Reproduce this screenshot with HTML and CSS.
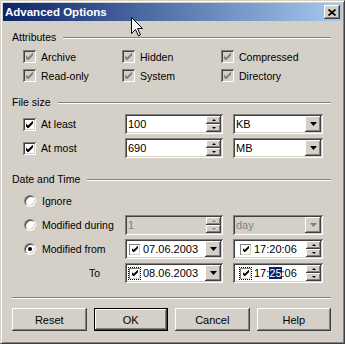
FILE: index.html
```html
<!DOCTYPE html>
<html>
<head>
<meta charset="utf-8">
<link rel="stylesheet" href="styles.css">
</head>
<body>
<div class="window">
  <div class="titlebar">
    <span class="title">Advanced Options</span>
    <span class="close"><svg width="8" height="7" viewBox="0 0 8 7"><path d="M0.5 0.5 L7.5 6.5 M7.5 0.5 L0.5 6.5" stroke="#000" stroke-width="1.7" fill="none"/></svg></span>
  </div>
  <div class="content">
    <div class="group-head"><span>Attributes</span><i class="etch"></i></div>
    <div class="attrs">
      <div class="check-item"><span class="cb disabled"><svg viewBox="0 0 7 7"><polygon points="0,2.5 2,4.5 7,-0.5 7,2.5 2,7.5 0,5.5"/></svg></span>Archive</div>
      <div class="check-item"><span class="cb disabled"><svg viewBox="0 0 7 7"><polygon points="0,2.5 2,4.5 7,-0.5 7,2.5 2,7.5 0,5.5"/></svg></span>Hidden</div>
      <div class="check-item"><span class="cb disabled"><svg viewBox="0 0 7 7"><polygon points="0,2.5 2,4.5 7,-0.5 7,2.5 2,7.5 0,5.5"/></svg></span>Compressed</div>
      <div class="check-item"><span class="cb disabled"><svg viewBox="0 0 7 7"><polygon points="0,2.5 2,4.5 7,-0.5 7,2.5 2,7.5 0,5.5"/></svg></span>Read-only</div>
      <div class="check-item"><span class="cb disabled"><svg viewBox="0 0 7 7"><polygon points="0,2.5 2,4.5 7,-0.5 7,2.5 2,7.5 0,5.5"/></svg></span>System</div>
      <div class="check-item"><span class="cb disabled"><svg viewBox="0 0 7 7"><polygon points="0,2.5 2,4.5 7,-0.5 7,2.5 2,7.5 0,5.5"/></svg></span>Directory</div>
    </div>

    <div class="group-head gap10"><span>File size</span><i class="etch"></i></div>
    <div class="rows">
      <div class="row">
        <div class="check-item"><span class="cb"><svg viewBox="0 0 7 7"><polygon points="0,2.5 2,4.5 7,-0.5 7,2.5 2,7.5 0,5.5"/></svg></span>At least</div>
        <div class="field"><span class="val">100</span><span class="spin"><b><i class="up"></i></b><b><i class="down"></i></b></span></div>
        <div class="field"><span class="val">KB</span><span class="drop"><svg width="7" height="4" viewBox="0 0 7 4"><polygon points="0,0 7,0 3.5,4"/></svg></span></div>
      </div>
      <div class="row">
        <div class="check-item"><span class="cb"><svg viewBox="0 0 7 7"><polygon points="0,2.5 2,4.5 7,-0.5 7,2.5 2,7.5 0,5.5"/></svg></span>At most</div>
        <div class="field"><span class="val">690</span><span class="spin"><b><i class="up"></i></b><b><i class="down"></i></b></span></div>
        <div class="field"><span class="val">MB</span><span class="drop"><svg width="7" height="4" viewBox="0 0 7 4"><polygon points="0,0 7,0 3.5,4"/></svg></span></div>
      </div>
    </div>

    <div class="group-head gap14"><span>Date and Time</span><i class="etch"></i></div>
    <div class="rows">
      <div class="row">
        <div class="radio-item"><span class="radio"></span>Ignore</div>
      </div>
      <div class="row">
        <div class="radio-item"><span class="radio"></span>Modified during</div>
        <div class="field disabled"><span class="val">1</span><span class="spin"><b><i class="up"></i></b><b><i class="down"></i></b></span></div>
        <div class="field disabled"><span class="val">day</span><span class="drop"><svg width="7" height="4" viewBox="0 0 7 4"><polygon points="0,0 7,0 3.5,4"/></svg></span></div>
      </div>
      <div class="row">
        <div class="radio-item"><span class="radio on"></span>Modified from</div>
        <div class="field"><span class="mini"><span class="mcb"><svg viewBox="0 0 7 7"><polygon points="0,2.5 2,4.5 7,-0.5 7,2.5 2,7.5 0,5.5"/></svg></span></span><span class="val">07.06.2003</span><span class="drop"><svg width="7" height="4" viewBox="0 0 7 4"><polygon points="0,0 7,0 3.5,4"/></svg></span></div>
        <div class="field"><span class="mini wide"><span class="mcb"><svg viewBox="0 0 7 7"><polygon points="0,2.5 2,4.5 7,-0.5 7,2.5 2,7.5 0,5.5"/></svg></span></span><span class="val">17:20:06</span><span class="spin"><b><i class="up"></i></b><b><i class="down"></i></b></span></div>
      </div>
      <div class="row">
        <div class="to-label">To</div>
        <div class="field"><span class="mini focus"><span class="mcb"><svg viewBox="0 0 7 7"><polygon points="0,2.5 2,4.5 7,-0.5 7,2.5 2,7.5 0,5.5"/></svg></span></span><span class="val">08.06.2003</span><span class="drop"><svg width="7" height="4" viewBox="0 0 7 4"><polygon points="0,0 7,0 3.5,4"/></svg></span></div>
        <div class="field"><span class="mini wide focus"><span class="mcb"><svg viewBox="0 0 7 7"><polygon points="0,2.5 2,4.5 7,-0.5 7,2.5 2,7.5 0,5.5"/></svg></span></span><span class="val">17:<span class="sel">25</span>:06</span><span class="spin"><b><i class="up"></i></b><b><i class="down"></i></b></span></div>
      </div>
    </div>

    <div class="sep"></div>
    <div class="buttons">
      <div class="btn">Reset</div>
      <div class="btn default">OK</div>
      <div class="btn">Cancel</div>
      <div class="btn">Help</div>
    </div>
  </div>
  <svg class="cursor" width="12" height="20" viewBox="0 0 12 20"><path d="M0.5 0.5 L0.5 16.5 L4.5 12.5 L7.5 19 L9.5 18 L6.5 11.5 L11.5 11.5 Z" fill="#fff" stroke="#000" stroke-width="1"/></svg>
</div>
</body>
</html>
```

FILE: styles.css
```css
* { box-sizing: border-box; }
html, body { margin: 0; padding: 0; background: #d4d0c8; }
body {
  font-family: "Liberation Sans", Arial, sans-serif;
  font-size: 10.5px;
  color: #000;
}
.window {
  position: relative;
  width: 345px;
  height: 344px;
  background: #d4d0c8;
  border: 1px solid;
  border-color: #d4d0c8 #404040 #404040 #d4d0c8;
  box-shadow: inset 1px 1px #fff, inset -1px -1px #808080;
  padding: 2px;
  display: flex;
  flex-direction: column;
}
.titlebar {
  height: 18px;
  flex: none;
  background: linear-gradient(to right, #0a246a, #a6caf0);
  display: flex;
  align-items: center;
  justify-content: space-between;
  padding: 0 2px;
}
.title {
  color: #fff;
  font-weight: bold;
  font-size: 11.5px;
}
.close {
  width: 16px;
  height: 14px;
  background: #d4d0c8;
  box-shadow: inset -1px -1px #404040, inset 1px 1px #fff, inset -2px -2px #808080;
  display: flex;
  align-items: center;
  justify-content: center;
}
.content {
  flex: 1;
  display: flex;
  flex-direction: column;
  padding: 0 11px 0 9px;
}
.group-head {
  display: flex;
  align-items: center;
  height: 14px;
  margin-top: 9px;
}
.group-head.gap10 { margin-top: 10px; }
.group-head.gap14 { margin-top: 14px; }
.etch {
  flex: 1;
  height: 2px;
  border-top: 1px solid #808080;
  border-bottom: 1px solid #fff;
  margin-left: 7px;
  margin-top: 1px;
}
.attrs {
  display: grid;
  grid-template-columns: 99px 99px 1fr;
  grid-auto-rows: 19px;
  margin-top: 3px;
  padding-left: 11px;
}
.check-item, .radio-item {
  display: flex;
  align-items: center;
  gap: 5px;
  white-space: nowrap;
}
.radio-item { gap: 6px; padding-left: 1px; }
.cb {
  flex: none;
  width: 13px;
  height: 13px;
  background: #fff;
  box-shadow: inset 1px 1px #808080, inset -1px -1px #fff, inset 2px 2px #404040, inset -2px -2px #d4d0c8;
  display: flex;
  align-items: center;
  justify-content: center;
  fill: #000;
}
.cb.disabled { background: #d4d0c8; fill: #808080; }
.cb svg { width: 7px; height: 7px; }
.radio {
  flex: none;
  width: 12px;
  height: 12px;
  border-radius: 50%;
  background: #fff;
  border: 1px solid;
  border-color: #808080 #fff #fff #808080;
  box-shadow: inset 1px 1px #404040, inset -1px -1px #d4d0c8;
  display: flex;
  align-items: center;
  justify-content: center;
}
.radio.on::after {
  content: "";
  width: 4px;
  height: 4px;
  border-radius: 50%;
  background: #000;
}
.rows {
  display: flex;
  flex-direction: column;
  gap: 4px;
  margin-top: 5px;
  padding-left: 11px;
}
.row {
  display: grid;
  grid-template-columns: 92px 98px 90px;
  column-gap: 10px;
  height: 20px;
  align-items: center;
}
.field {
  height: 20px;
  background: #fff;
  box-shadow: inset 1px 1px #808080, inset -1px -1px #fff, inset 2px 2px #404040, inset -2px -2px #d4d0c8;
  padding: 2px;
  display: flex;
  align-items: stretch;
  font-size: 11px;
}
.field .val {
  flex: 1;
  padding-left: 1px;
  line-height: 16px;
  white-space: nowrap;
}
.field.disabled { background: #d4d0c8; color: #808080; }
.field.disabled .drop svg { fill: #808080; }
.field.disabled .spin i { border-bottom-color: #808080; border-top-color: #808080; }
.spin {
  width: 15px;
  display: flex;
  flex-direction: column;
}
.spin b {
  flex: 1;
  background: #d4d0c8;
  box-shadow: inset -1px -1px #404040, inset 1px 1px #fff, inset -2px -2px #808080;
  display: flex;
  align-items: center;
  justify-content: center;
}
.spin i { width: 0; height: 0; border-left: 2px solid transparent; border-right: 2px solid transparent; }
.spin i.up { border-bottom: 2px solid #000; }
.spin i.down { border-top: 2px solid #000; }
.drop {
  width: 16px;
  background: #d4d0c8;
  box-shadow: inset -1px -1px #404040, inset 1px 1px #fff, inset -2px -2px #808080;
  display: flex;
  align-items: center;
  justify-content: center;
  fill: #000;
}
.mini {
  width: 15px;
  display: flex;
  align-items: center;
  justify-content: center;
}
.mini.wide { width: 18px; justify-content: flex-end; padding-right: 2px; }
.mini.focus .mcb { outline: 1px dotted #000; outline-offset: 0; }
.mcb {
  width: 11px;
  height: 11px;
  background: #fff;
  box-shadow: inset 1px 1px #808080, inset -1px -1px #d4d0c8;
  display: flex;
  align-items: center;
  justify-content: center;
  fill: #000;
}
.mcb svg { width: 6px; height: 6px; }
.sel { background: #0a246a; color: #fff; }
.to-label { text-align: right; padding-right: 15px; }
.sep {
  height: 2px;
  border-top: 1px solid #808080;
  border-bottom: 1px solid #fff;
  margin-top: 14px;
}
.buttons {
  display: flex;
  gap: 7px;
  margin-top: 9px;
}
.btn {
  width: 75px;
  height: 23px;
  background: #d4d0c8;
  box-shadow: inset -1px -1px #404040, inset 1px 1px #fff, inset -2px -2px #808080;
  display: flex;
  align-items: center;
  justify-content: center;
  font-size: 11px;
}
.btn.default {
  box-shadow: inset 0 0 0 1px #000, inset -2px -2px #404040, inset 2px 2px #fff, inset -3px -3px #808080;
}
.cursor {
  position: absolute;
  left: 130px;
  top: 16px;
}
```
